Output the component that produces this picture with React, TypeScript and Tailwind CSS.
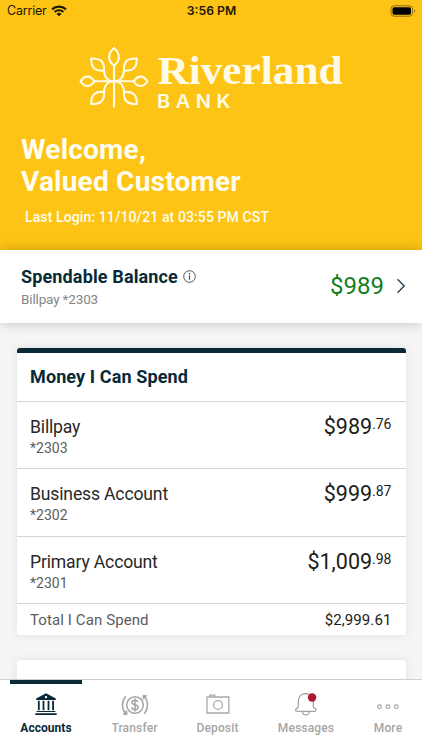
import React from "react";

const accounts = [
  { name: "Billpay", number: "*2303", whole: "$989", cents: ".76" },
  { name: "Business Account", number: "*2302", whole: "$999", cents: ".87" },
  { name: "Primary Account", number: "*2301", whole: "$1,009", cents: ".98" },
];

function StatusBar() {
  return (
    <div className="flex h-[22px] items-center justify-between pl-[7px] pr-[6px] font-[Inter,sans-serif] text-[#1d1703]">
      <div className="flex w-[120px] items-center gap-[4px]">
        <span className="text-[12.5px] leading-[22px] tracking-[-0.2px]">Carrier</span>
        <svg width="16" height="12" viewBox="0 0 16 12" fill="none" stroke="#1d1703">
          <path d="M1.1 4.3a10 10 0 0 1 13.8 0" strokeWidth="2.3" />
          <path d="M3.6 7a6.3 6.3 0 0 1 8.8 0" strokeWidth="2.1" />
          <path d="M8 11.3 5.5 8.9a3.6 3.6 0 0 1 5 0z" fill="#1d1703" stroke="none" />
        </svg>
      </div>
      <span className="text-[12.2px] font-semibold leading-[22px]">3:56 PM</span>
      <div className="flex w-[120px] justify-end">
        <svg width="26" height="12" viewBox="0 0 26 12">
          <rect x="1" y=".8" width="21.5" height="10.4" rx="3" fill="none" stroke="#8d6d0d" />
          <rect x="2.5" y="2.3" width="18.5" height="7.4" rx="1.7" fill="#000" />
          <path d="M24 4.3v3.4c1.5-.6 1.5-2.8 0-3.4z" fill="#8d6d0d" />
        </svg>
      </div>
    </div>
  );
}

function Logo() {
  return (
    <svg width="266" height="66" viewBox="0 0 266 66" className="ml-[78px] mt-[23px] block" fill="none" stroke="#fffbe6">
      <g strokeWidth="2.1" strokeLinejoin="round">
        <path d="M36 62.500V20.500" />
        <path d="M36 20.500c-6.500-4.800-6.500-11.500 0-17.500c6.500 6 6.500 12.700 0 17.500z" />
        <path d="M16.500 36.300H55.500" />
        <path d="M16.500 36.300c-4.500 6.300-10 6.300-14 0c4-6.300 9.500-6.300 14 0z" />
        <path d="M55.500 36.300c4.500 6.300 10 6.300 14 0c-4-6.300-9.500-6.300-14 0z" />
        <path d="M26 25.500c-8.500 1-13-2.500-12.800-12c9.500-.5 13.600 3.500 12.800 12z" />
        <path d="M46 25.500c8.500 1 13-2.500 12.800-12c-9.500-.5-13.600 3.500-12.800 12z" />
        <path d="M26 47c-8.500-1-13 2.500-12.800 12c9.500.5 13.600-3.500 12.800-12z" />
        <path d="M46 47c8.500-1 13 2.500 12.800 12c-9.500.5-13.600-3.500-12.800-12z" />
        <path d="M26 25.500c.5 7 3 10.800 10 10.800c7 0 9.500-3.800 10-10.800M26 47c.5-7 3-10.700 10-10.700c7 0 9.500 3.700 10 10.700" />
      </g>
      <g fill="#fffbe6" stroke="none">
        <text x="79.500" y="39.300" fontFamily="Liberation Serif, serif" fontWeight="700" fontSize="40" textLength="185" lengthAdjust="spacingAndGlyphs">Riverland</text>
        <text x="79" y="62.800" fontFamily="Inter, sans-serif" fontWeight="600" fontSize="18" letterSpacing="5" textLength="79" lengthAdjust="spacingAndGlyphs">BANK</text>
      </g>
    </svg>
  );
}

function BankIcon() {
  return (
    <svg width="24" height="24" viewBox="0 0 24 24" fill="#082a38">
      <path d="M12 1.200 2.200 6.500v1.400h19.600V6.500zM12 3.900a1.200 1.200 0 1 1 0 2.400a1.200 1.200 0 0 1 0-2.400z" fillRule="evenodd" />
      <path d="M3.900 8.800h1.800v9.400H3.900zM8.600 8.800h1.800v9.400H8.600zM13.600 8.800h1.800v9.400h-1.800zM18.200 8.800H20v9.400h-1.800zM2.600 18.900h18.800v1.200H2.600zM1.300 21.200h21.400v1.900H1.300z" />
    </svg>
  );
}

function TransferIcon() {
  return (
    <svg width="28" height="24" viewBox="0 0 28 24" fill="none" stroke="#a5a5a8" strokeWidth="1.500">
      <circle cx="14" cy="13" r="8.300" />
      <path d="M17 10.100c-.4-1.300-1.400-1.900-3-1.900c-1.800 0-3 .8-3 2.200c0 3.300 6.100 1.500 6.100 4.900c0 1.500-1.200 2.400-3.100 2.400c-1.800 0-3-.8-3.200-2.300M14 6.500v13" />
      <path d="M4.800 4.300c-4.300 4.800-4.300 12.500-.3 17.200M23.200 21.700c4.300-4.800 4.300-12.500.3-17.200" />
      <path d="m2 22.500 4.200.2-.4-4.300zM26 3.500l-4.200-.2.4 4.300z" fill="#a5a5a8" strokeWidth=".6" />
    </svg>
  );
}

function CameraIcon() {
  return (
    <svg width="24" height="24" viewBox="0 0 24 24" fill="none" stroke="#a9a9ac" strokeWidth="1.300">
      <path d="M1 5h21.800v16H1zM3.800 5V3.200h5V5" />
      <circle cx="12" cy="13" r="4.400" />
    </svg>
  );
}

function BellIcon() {
  return (
    <svg width="24" height="24" viewBox="0 0 24 24" fill="none" stroke="#a5a5a8" strokeWidth="1.300">
      <path d="M11.800 1.500c-4.900 0-7.500 3.500-7.500 8v5.300c0 1.500-2.700 1.300-2.700 3.200c0 1 .6 1.400 1.500 1.400h17.400c.9 0 1.500-.4 1.500-1.400c0-1.900-2.700-1.700-2.700-3.200V9.500c0-4.500-2.600-8-7.500-8z" />
      <path d="M8.200 19.500c.4 2.400 1.700 3.400 3.600 3.400s3.200-1 3.600-3.400" />
      <circle cx="18.100" cy="5.500" r="4.200" fill="#aa1831" stroke="none" />
    </svg>
  );
}

function MoreIcon() {
  return (
    <svg width="24" height="24" viewBox="0 0 24 24" fill="none" stroke="#a5a5a8" strokeWidth="1.200">
      <circle cx="3.500" cy="14.700" r="1.800" />
      <circle cx="11.900" cy="14.700" r="1.800" />
      <circle cx="20.300" cy="14.700" r="1.800" />
    </svg>
  );
}

export default function App() {
  return (
    <div className="flex h-[750px] w-[422px] flex-col overflow-hidden bg-[#f5f5f5] font-[Roboto,sans-serif]">
      <header className="h-[250px] shrink-0 bg-[#fdc415] text-[#fffdf0]">
        <StatusBar />
        <Logo />
        <h1 className="ml-[21px] mt-[23px] text-[28px] font-bold leading-8 tracking-[0.22px]">
          Welcome,
          <br />
          Valued Customer
        </h1>
        <p className="ml-[25px] mt-[9px] text-[14px] font-medium leading-5 tracking-[0.11px]">Last Login: 11/10/21 at 03:55 PM CST</p>
      </header>

      <section className="z-10 flex h-[73px] shrink-0 items-center justify-between bg-white pl-[21px] pr-[16px] shadow-[0_0_12px_rgba(0,0,0,0.22)]">
        <div>
          <div className="flex items-center gap-[5px]">
            <h2 className="text-[18px] font-bold leading-6 tracking-[0.14px] text-[#082a38]">Spendable Balance</h2>
            <svg width="13" height="13" viewBox="0 0 13 13" fill="none" stroke="#304651">
              <circle cx="6.500" cy="6.500" r="5.800" strokeWidth=".9" />
              <path d="M6.500 5.400v4.400M6.500 3.100v1.300" strokeWidth="1.100" />
            </svg>
          </div>
          <p className="text-[13.500px] leading-5 tracking-[-0.15px] text-[#858585]">Billpay *2303</p>
        </div>
        <div className="flex items-center gap-[12px] pb-px">
          <span className="text-[24px] leading-8 text-[#128020]">$989</span>
          <svg width="10" height="16" viewBox="0 0 10 16" fill="none" stroke="#243c48" strokeWidth="1.300">
            <path d="m1.500 1.300 6.700 6.700-6.700 6.700" />
          </svg>
        </div>
      </section>

      <main className="flex min-h-0 flex-1 flex-col gap-[25px] overflow-hidden pl-[16.500px] pr-[16.500px] pt-[25px]">
        <section className="flex h-[286.500px] shrink-0 flex-col overflow-hidden rounded-[3px] border-t-[5px] border-[#082a38] bg-white shadow-[0_0_10px_rgba(0,0,0,0.09)]">
          <h2 className="h-[48px] shrink-0 pl-[13.500px] text-[18px] font-bold leading-[48px] tracking-[0.12px] text-[#082a38]">Money I Can Spend</h2>
          {accounts.map((account) => (
            <div key={account.number} className="flex h-[67.400px] shrink-0 justify-between border-t border-[#d6d6d6] pl-[13.500px] pr-[14px] pt-[13px]">
              <div>
                <p className="text-[17.600px] leading-6 tracking-[-0.17px] text-[#282828]">{account.name}</p>
                <p className="text-[14px] leading-[18px] text-[#5c5c5c]">{account.number}</p>
              </div>
              <div className="flex items-start text-[#202020]">
                <span className="text-[21.500px] leading-6">{account.whole}</span>
                <span className="text-[14px] leading-[18px]">{account.cents}</span>
              </div>
            </div>
          ))}
          <div className="flex flex-1 items-center justify-between border-t border-[#d6d6d6] pl-[13.500px] pr-[14px] pt-px text-[15px] leading-5">
            <span className="tracking-[0.1px] text-[#5c5c5c]">Total I Can Spend</span>
            <span className="tracking-[0.1px] text-[#202020]">$2,999.61</span>
          </div>
        </section>
        <section className="h-[80px] shrink-0 rounded-[3px] bg-white shadow-[0_0_10px_rgba(0,0,0,0.09)]" />
      </main>

      <nav className="z-10 flex h-[71px] shrink-0 border-t border-[#cfcfcf] bg-white pl-[10px] text-[12px] font-medium leading-4 text-[#a6a6a6]">
        <div className="flex w-[72px] shrink-0 flex-col items-center border-t-4 border-[#082a38] pt-[8px] font-bold text-[#082a38]">
          <BankIcon />
          <span className="mt-[4px] tracking-[0.05px]">Accounts</span>
        </div>
        <div className="ml-[16.500px] flex w-[72px] shrink-0 flex-col items-center pt-[12px]">
          <TransferIcon />
          <span className="mt-[4px] tracking-[0.15px]">Transfer</span>
        </div>
        <div className="ml-[11px] flex w-[72px] shrink-0 flex-col items-center pt-[12px]">
          <CameraIcon />
          <span className="mt-[4px] tracking-[0.15px]">Deposit</span>
        </div>
        <div className="ml-[16.500px] flex w-[72px] shrink-0 flex-col items-center pt-[12px]">
          <BellIcon />
          <span className="mt-[4px] tracking-[0.15px]">Messages</span>
        </div>
        <div className="ml-[10px] flex w-[72px] shrink-0 flex-col items-center pt-[12px]">
          <MoreIcon />
          <span className="mt-[4px] tracking-[0.15px]">More</span>
        </div>
      </nav>
    </div>
  );
}
